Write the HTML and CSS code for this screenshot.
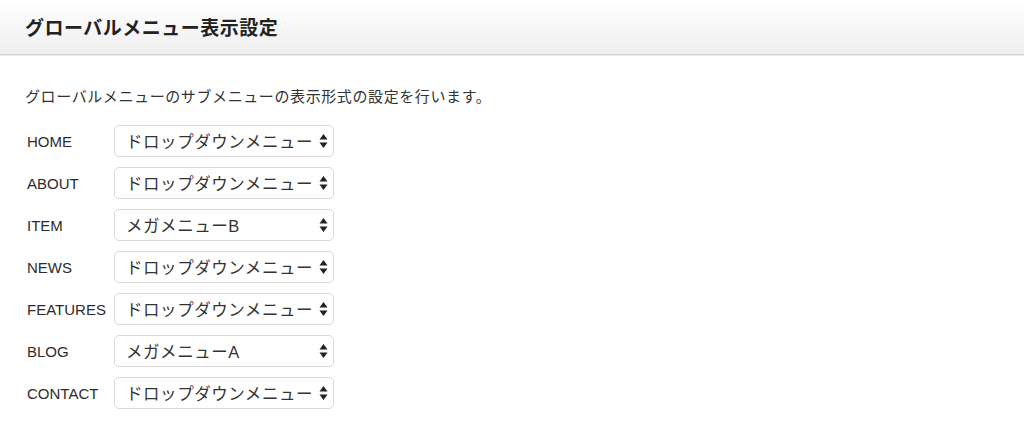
FILE: index.html
```html
<!DOCTYPE html>
<html lang="ja">
<head>
<meta charset="utf-8">
<title>グローバルメニュー表示設定</title>
<link rel="stylesheet" href="styles.css">
</head>
<body>
<header class="header">
  <h1 class="title">グローバルメニュー表示設定</h1>
</header>
<main class="content">
  <p class="desc">グローバルメニューのサブメニューの表示形式の設定を行います。</p>
  <div class="rows">
    <div class="row"><span class="label">HOME</span><div class="select"><span class="value">ドロップダウンメニュー</span><svg class="arrows" width="9" height="16" viewBox="0 0 9 16"><path d="M4.5 1 L8.5 6.5 L0.5 6.5 Z M4.5 15 L8.5 9.5 L0.5 9.5 Z" fill="#222"/></svg></div></div>
    <div class="row"><span class="label">ABOUT</span><div class="select"><span class="value">ドロップダウンメニュー</span><svg class="arrows" width="9" height="16" viewBox="0 0 9 16"><path d="M4.5 1 L8.5 6.5 L0.5 6.5 Z M4.5 15 L8.5 9.5 L0.5 9.5 Z" fill="#222"/></svg></div></div>
    <div class="row"><span class="label">ITEM</span><div class="select"><span class="value">メガメニューB</span><svg class="arrows" width="9" height="16" viewBox="0 0 9 16"><path d="M4.5 1 L8.5 6.5 L0.5 6.5 Z M4.5 15 L8.5 9.5 L0.5 9.5 Z" fill="#222"/></svg></div></div>
    <div class="row"><span class="label">NEWS</span><div class="select"><span class="value">ドロップダウンメニュー</span><svg class="arrows" width="9" height="16" viewBox="0 0 9 16"><path d="M4.5 1 L8.5 6.5 L0.5 6.5 Z M4.5 15 L8.5 9.5 L0.5 9.5 Z" fill="#222"/></svg></div></div>
    <div class="row"><span class="label">FEATURES</span><div class="select"><span class="value">ドロップダウンメニュー</span><svg class="arrows" width="9" height="16" viewBox="0 0 9 16"><path d="M4.5 1 L8.5 6.5 L0.5 6.5 Z M4.5 15 L8.5 9.5 L0.5 9.5 Z" fill="#222"/></svg></div></div>
    <div class="row"><span class="label">BLOG</span><div class="select"><span class="value">メガメニューA</span><svg class="arrows" width="9" height="16" viewBox="0 0 9 16"><path d="M4.5 1 L8.5 6.5 L0.5 6.5 Z M4.5 15 L8.5 9.5 L0.5 9.5 Z" fill="#222"/></svg></div></div>
    <div class="row"><span class="label">CONTACT</span><div class="select"><span class="value">ドロップダウンメニュー</span><svg class="arrows" width="9" height="16" viewBox="0 0 9 16"><path d="M4.5 1 L8.5 6.5 L0.5 6.5 Z M4.5 15 L8.5 9.5 L0.5 9.5 Z" fill="#222"/></svg></div></div>
  </div>
</main>
</body>
</html>
```
FILE: styles.css
```css
html, body {
  margin: 0;
  padding: 0;
  background: #fff;
}
body {
  font-family: "Liberation Sans", "Noto Sans CJK JP", sans-serif;
  color: #333;
  width: 1024px;
  height: 434px;
  overflow: hidden;
}
.header {
  height: 55px;
  box-sizing: border-box;
  background: linear-gradient(#ffffff, #efefef);
  border-bottom: 1px solid #d2d2d2;
  box-shadow: 0 1px 0 #ececec;
  display: flex;
  align-items: center;
  padding: 0 25px;
}
.title {
  margin: 0;
  font-size: 19px;
  letter-spacing: 0.5px;
  font-weight: bold;
  color: #222;
  line-height: 1;
  padding-top: 2px;
}
.content {
  padding: 0 25px;
}
.desc {
  margin: 0;
  padding-top: 32px;
  font-size: 15px;
  letter-spacing: 0.6px;
  line-height: 20px;
  color: #333;
}
.rows {
  margin-top: 18px;
  display: flex;
  flex-direction: column;
  gap: 10px;
}
.row {
  display: flex;
  align-items: center;
  height: 32px;
}
.label {
  width: 89px;
  padding-left: 2px;
  box-sizing: border-box;
  font-size: 15px;
  color: #2c2c2c;
}
.select {
  width: 220px;
  height: 32px;
  box-sizing: border-box;
  border: 1px solid #d9d9d9;
  border-radius: 5px;
  background: #fff;
  display: flex;
  align-items: center;
  justify-content: space-between;
  padding: 0 5px 0 11px;
}
.value {
  font-size: 16.5px;
  letter-spacing: 0.55px;
  color: #333;
  white-space: nowrap;
}
.arrows {
  flex: none;
}
```
